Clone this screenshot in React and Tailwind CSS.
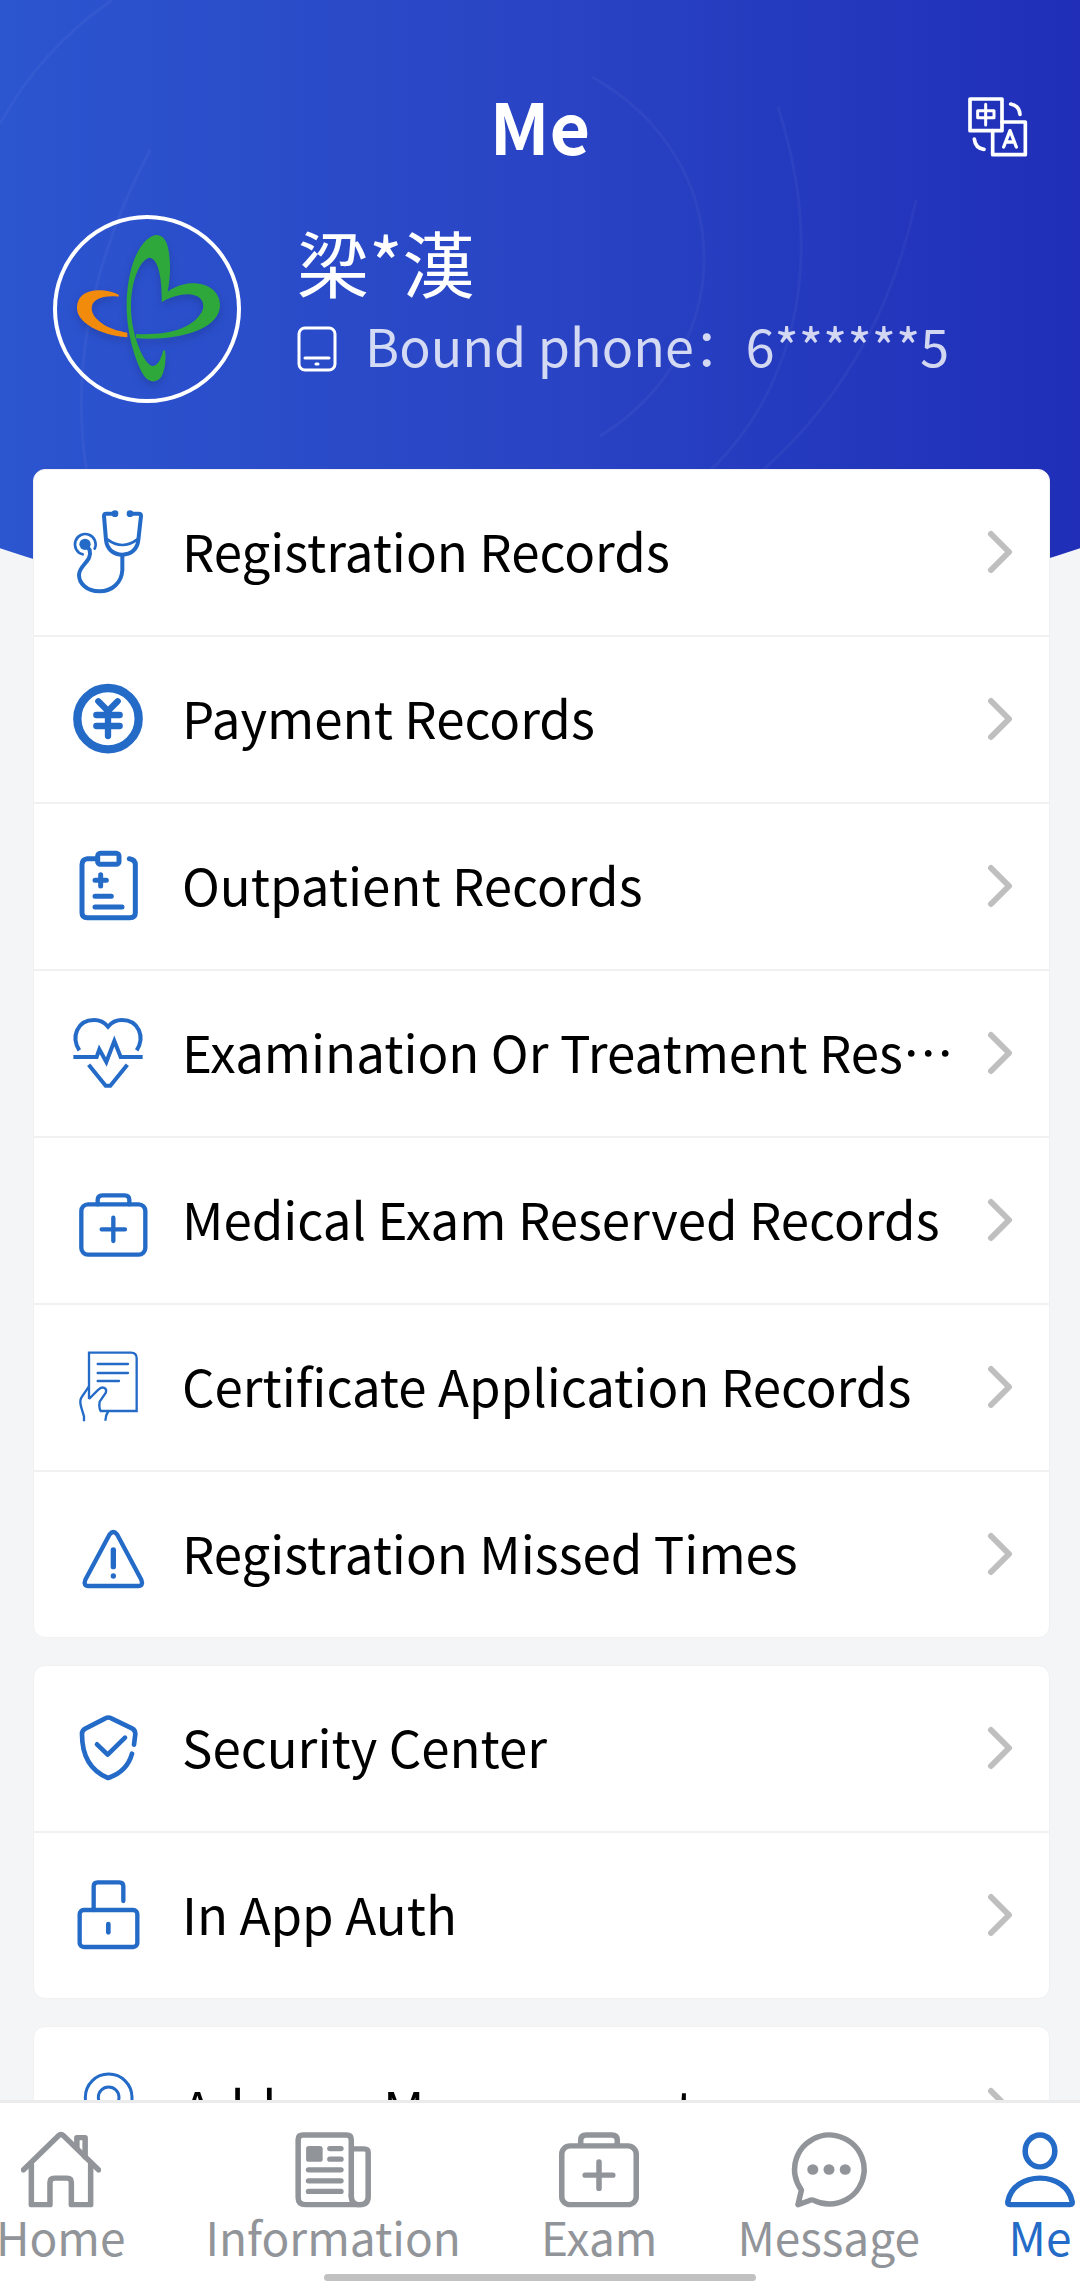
const StethoscopeIcon = () => (
  <svg viewBox="0 0 252 252" className="size-[84px] shrink-0" fill="none" stroke="currentColor" strokeWidth="12" strokeLinecap="round" strokeLinejoin="round" aria-hidden="true">
    <path d="M147 11H121Q114 11 114 18L120 90C123 120 145 134 169 134C195 134 214 118 217 90L225 18Q225 11 218 11H192" />
    <path d="M124 88Q169 122 214 88" strokeWidth="8" />
    <circle cx="147" cy="11" r="10" fill="currentColor" stroke="none" />
    <circle cx="192" cy="11" r="10" fill="currentColor" stroke="none" />
    <path d="M169 138V180C167 217 140 244 100 244C60 244 39 218 39 195C39 164 80 155 71 120L62 108" />
    <path d="M50 133A31 31 0 1 1 86 116" strokeWidth="8" />
    <circle cx="57" cy="103" r="17" fill="currentColor" stroke="none" />
  </svg>
);

const YenIcon = () => (
  <svg viewBox="0 0 252 252" className="size-[84px] shrink-0" fill="none" stroke="currentColor" strokeWidth="19" strokeLinecap="round" strokeLinejoin="round" aria-hidden="true">
    <circle cx="126" cy="125" r="92" strokeWidth="25" />
    <path d="M97 73L126 102L155 73M126 102V177M91 114H161M91 147H161" />
  </svg>
);

const ClipboardIcon = () => (
  <svg viewBox="0 0 252 252" className="size-[84px] shrink-0" fill="none" stroke="currentColor" strokeWidth="15" strokeLinecap="round" strokeLinejoin="round" aria-hidden="true">
    <path d="M95 44H64Q48 46 48 62V206Q48 221 64 221H192Q208 221 208 206V62Q208 47 190 44" />
    <rect x="95" y="28" width="64" height="33" rx="8" />
    <path d="M104 92V126M87 109H121M87 157H136M87 189H168" />
  </svg>
);

const HeartPulseIcon = () => (
  <svg viewBox="0 0 252 252" className="size-[84px] shrink-0" fill="none" stroke="currentColor" strokeWidth="12" aria-hidden="true">
    <path d="M40 118C14 78 34 27 84 27C102 27 117 36 126 47C135 36 150 27 168 27C218 27 238 78 212 118" />
    <path d="M22 138H92L100 115L121 153L145 90L164 138H230" />
    <path d="M68 161L119 224H133L184 161" />
  </svg>
);

const MedicalKitIcon = () => (
  <svg viewBox="0 0 252 252" className="size-[84px] shrink-0" fill="none" stroke="currentColor" strokeWidth="13" strokeLinecap="round" strokeLinejoin="round" aria-hidden="true">
    <rect x="46" y="79" width="192" height="151" rx="20" />
    <path d="M95 79V66Q95 52 109 52H176Q190 52 190 66V79" />
    <path d="M142 119V189M107 154H177" />
  </svg>
);

const CertificateIcon = () => (
  <svg viewBox="0 0 252 252" className="size-[84px] shrink-0" fill="none" stroke="currentColor" strokeWidth="7" aria-hidden="true">
    <path d="M69 162V23H195Q212 23 212 40V198H104Q98 188 101 170L119 144C125 128 108 122 97 134L69 162" />
    <path d="M69 124L46 158Q40 168 46 188L54 214V229" />
    <path d="M127 198Q118 212 118 227" />
    <path d="M95 57H186M95 84H186M95 108H159" strokeLinecap="round" />
  </svg>
);

const WarningIcon = () => (
  <svg viewBox="0 0 252 252" className="size-[84px] shrink-0" fill="none" stroke="currentColor" strokeWidth="13" strokeLinecap="round" strokeLinejoin="round" aria-hidden="true">
    <path d="M131 67Q142 53 153 67L226 203Q233 222 216 222H68Q51 222 58 203Z" />
    <path d="M142 114V164" strokeWidth="16" />
    <circle cx="142" cy="192" r="8" fill="currentColor" stroke="none" />
  </svg>
);

const ShieldIcon = () => (
  <svg viewBox="0 0 252 252" className="size-[84px] shrink-0" fill="none" stroke="currentColor" strokeWidth="14" strokeLinecap="round" strokeLinejoin="round" aria-hidden="true">
    <path d="M204 116L208 84Q208 72 198 67L136 37Q127 32 118 37L58 68Q48 73 48 84C48 150 75 195 126 216C160 205 188 180 198 143" />
    <path d="M93 115L125 146L177 95" />
  </svg>
);

const LockIcon = () => (
  <svg viewBox="0 0 252 252" className="size-[84px] shrink-0" fill="none" stroke="currentColor" strokeWidth="13" strokeLinecap="round" strokeLinejoin="round" aria-hidden="true">
    <rect x="41" y="111" width="173" height="111" rx="12" />
    <path d="M83 111V40Q83 28 95 28H160Q172 28 172 40V84" />
    <path d="M127 153V178" strokeWidth="14" />
  </svg>
);

const PinIcon = () => (
  <svg viewBox="0 0 252 252" className="size-[84px] shrink-0" fill="none" stroke="currentColor" strokeWidth="9" strokeLinejoin="round" aria-hidden="true">
    <path d="M128 238C90 200 58 150 58 91A70 70 0 0 1 198 91C198 150 166 200 128 238Z" />
    <circle cx="128" cy="91" r="31" />
  </svg>
);

const HomeIcon = () => (
  <svg viewBox="0 0 232 232" preserveAspectRatio="none" className="h-[77px] w-20" fill="none" stroke="currentColor" strokeWidth="16" strokeLinecap="round" strokeLinejoin="round" aria-hidden="true">
    <path d="M7 117L109 14Q116 7 123 14L225 117" />
    <path d="M30 100V222H84V155Q84 142 97 142H134Q146 142 146 155V222H202V100" />
    <path d="M162 50V20H186V78" />
  </svg>
);

const NewsIcon = () => (
  <svg viewBox="0 0 232 232" preserveAspectRatio="none" className="h-[77px] w-20" fill="none" stroke="currentColor" strokeWidth="16" strokeLinecap="round" strokeLinejoin="round" aria-hidden="true">
    <path d="M169 195V26Q169 12 155 12H29Q15 12 15 26V200Q15 222 37 222H193Q218 222 218 198V65Q218 54 206 54H169" />
    <path d="M169 195Q169 222 193 222" />
    <path d="M107 53H139M107 85H139M45 117H139M45 150H139M45 182H139" />
    <rect x="38" y="45" width="48" height="48" rx="8" fill="currentColor" stroke="none" />
  </svg>
);

const ExamIcon = () => (
  <svg viewBox="0 0 232 232" preserveAspectRatio="none" className="h-[77px] w-20" fill="none" stroke="currentColor" strokeWidth="16" strokeLinecap="round" strokeLinejoin="round" aria-hidden="true">
    <rect x="8" y="45" width="216" height="177" rx="24" />
    <path d="M63 42V28Q63 12 79 12H153Q169 12 169 28V42" />
    <path d="M116 93V173M76 133H156" />
  </svg>
);

const MessageIcon = () => (
  <svg viewBox="0 0 232 232" preserveAspectRatio="none" className="h-[77px] w-20" fill="none" stroke="currentColor" strokeWidth="16" strokeLinecap="round" strokeLinejoin="round" aria-hidden="true">
    <path d="M36 178A101 104 0 1 1 72 209Q66 206 58 210L26 222Z" />
    <g fill="currentColor" stroke="none">
      <circle cx="69" cy="116" r="16" />
      <circle cx="116" cy="116" r="16" />
      <circle cx="163" cy="116" r="16" />
    </g>
  </svg>
);

const PersonIcon = () => (
  <svg viewBox="0 0 232 232" preserveAspectRatio="none" className="h-[77px] w-20" fill="none" stroke="currentColor" strokeWidth="16" strokeLinejoin="round" aria-hidden="true">
    <ellipse cx="116" cy="60" rx="43" ry="48" />
    <path d="M29 222Q21 222 23 212C31 168 70 142 116 142C162 142 201 168 209 212Q211 222 203 222Z" />
  </svg>
);

const TranslateIcon = () => (
  <svg viewBox="0 0 180 180" className="size-[60px]" fill="none" stroke="currentColor" strokeWidth="11" strokeLinecap="round" strokeLinejoin="round" aria-hidden="true">
    <rect x="6" y="6" width="96" height="95" />
    <path d="M102 75H172V173H74V101" />
    <path d="M29 41H78V62H29ZM53 22V84" strokeWidth="9" />
    <path d="M107 150L126 101L145 150M113 135H139" strokeWidth="10" />
    <path d="M128 21Q154 26 156 52M19 126Q22 154 48 157" />
  </svg>
);

const HospitalLogo = () => (
  <svg viewBox="0 0 540 540" className="size-full drop-shadow-lg" role="img" aria-label="Avatar">
    <path fill="#f28a0c" d="M186 228C150 208 60 200 60 268C60 310 125 348 211 355V341C150 332 104 300 104 268C104 240 140 228 184 233Z" />
    <path fill="#2ea83a" d="M332 218C340 180 342 130 334 90C326 50 305 44 288 50C240 70 209 160 209 263C209 340 235 430 262 472C276 492 300 492 312 475C324 455 328 420 324 393L318 396C310 430 298 441 286 441C262 437 222 350 222 263C222 180 252 118 279 116C304 120 316 180 314 250C330 240 360 226 395 226C440 228 448 262 430 285C405 325 340 350 237 345V358C370 366 489 330 489 258C489 195 400 170 332 218Z" />
  </svg>
);

const menuGroups = [
  [
    { label: "Registration Records", icon: StethoscopeIcon },
    { label: "Payment Records", icon: YenIcon },
    { label: "Outpatient Records", icon: ClipboardIcon },
    { label: "Examination Or Treatment Results", icon: HeartPulseIcon },
    { label: "Medical Exam Reserved Records", icon: MedicalKitIcon },
    { label: "Certificate Application Records", icon: CertificateIcon },
    { label: "Registration Missed Times", icon: WarningIcon },
  ],
  [
    { label: "Security Center", icon: ShieldIcon },
    { label: "In App Auth", icon: LockIcon },
  ],
  [{ label: "Address Management", icon: PinIcon }],
];

const tabs = [
  { label: "Home", icon: HomeIcon },
  { label: "Information", icon: NewsIcon },
  { label: "Exam", icon: ExamIcon },
  { label: "Message", icon: MessageIcon },
  { label: "Me", icon: PersonIcon, active: true },
];

const MenuRow = ({ label, icon: Icon }) => (
  <li>
    <a href="#" className="flex h-[165px] items-center pr-9 pb-0.5 pl-8">
      <span className="text-[#246bc8]">
        <Icon />
      </span>
      <span className="ml-8 min-w-0 flex-1 truncate pb-0.5">{label}</span>
      <svg viewBox="0 0 26 44" className="ml-4 h-11 w-[26px] shrink-0" fill="none" stroke="#bfbfbf" strokeWidth="6" strokeLinecap="round" strokeLinejoin="round" aria-hidden="true">
        <path d="M4 4L22 22L4 40" />
      </svg>
    </a>
  </li>
);

const Header = () => (
  <header className="relative h-[640px] bg-linear-to-r from-[#2c55d0] via-[#2944c4] to-[#202eb8] [clip-path:ellipse(158%_1708px_at_50%_-1072px)]">
    <svg viewBox="0 0 1080 640" preserveAspectRatio="none" className="absolute inset-0 size-full" fill="none" stroke="#fff" strokeOpacity="0.04" strokeWidth="3" aria-hidden="true">
      <path d="M112 0Q40 50 0 124" />
      <path d="M150 150Q60 320 88 480" />
      <path d="M592 77C740 160 740 350 600 436" />
      <path d="M778 107C830 270 790 400 700 480" />
      <path d="M916 200Q880 370 757 475" />
    </svg>
    <div className="relative">
      <div className="grid grid-cols-3 items-center px-[52px] pt-20">
        <h1 className="col-start-2 pb-1 text-center text-[70px] leading-[90px] font-bold">Me</h1>
        <button type="button" aria-label="Switch language" className="justify-self-end">
          <TranslateIcon />
        </button>
      </div>
      <div className="mt-[41px] flex items-center px-[53px]">
        <div className="size-[188px] shrink-0 rounded-full border-4 border-white">
          <HospitalLogo />
        </div>
        <div className="ml-14 pb-4">
          <p className="text-[72px] leading-[88px]">梁*漢</p>
          <p className="flex items-center text-[52px] leading-[80px] text-white/80">
            <svg viewBox="0 0 40 46" className="mt-2 mr-7 h-[46px] w-10 text-white" fill="none" stroke="currentColor" strokeWidth="3" strokeLinecap="round" aria-hidden="true">
              <rect x="2" y="2" width="36" height="42" rx="6" />
              <path d="M8 32H32M19 38H21" />
            </svg>
            Bound phone：6******5
          </p>
        </div>
      </div>
    </div>
  </header>
);

const App = () => {
  return (
    <div className="flex h-screen flex-col overflow-hidden bg-[#f4f5f7] font-['Noto_Sans_CJK_SC','Noto_Sans',sans-serif] text-white">
      <div className="min-h-0 flex-1 overflow-y-auto [scrollbar-width:none]">
        <Header />
        <main className="relative -mt-[171px] flex flex-col gap-[27px] pr-[30px] pb-7 pl-[33px] text-[51px] text-black">
          {menuGroups.map((group) => (
            <ul key={group[0].label} className="divide-y-2 divide-[#f1f1f2] rounded-xl border border-[#f1f1f2] bg-white">
              {group.map((item) => (
                <MenuRow key={item.label} {...item} />
              ))}
            </ul>
          ))}
        </main>
      </div>

      <nav className="border-t-3 border-[#ebebeb] bg-white pt-7 pb-1">
        <ul className="-ml-1 flex justify-between">
          {tabs.map(({ label, icon: Icon, active }) => (
            <li key={label}>
              <a
                href="#"
                aria-current={active ? "page" : undefined}
                className={`flex flex-col items-center text-[46px] leading-[56px] ${active ? "text-[#246bc8]" : "text-[#919499]"}`}
              >
                <Icon />
                <span>{label}</span>
              </a>
            </li>
          ))}
        </ul>
        <div className="mx-auto mt-[10px] h-[7px] w-2/5 rounded-full bg-[#c1c1c1]" />
      </nav>
    </div>
  );
};

export default App;
